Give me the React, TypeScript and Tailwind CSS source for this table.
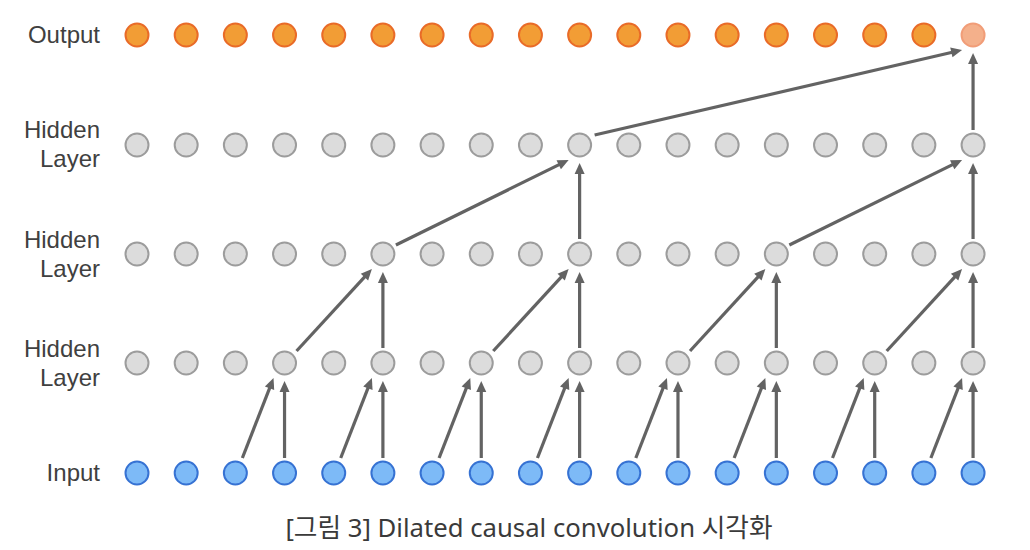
import React from "react";

const X = (i: number) => 137 + i * 49.18;
const ROWS = [473, 363, 254, 145, 35]; // input, h1, h2, h3, output

type Arrow = { x1: number; y1: number; x2: number; y2: number };

function buildArrows(): Arrow[] {
  const arrows: Arrow[] = [];
  const tip = { dx: -11, dy: 15 };
  const layers: { from: number; to: number; step: number; idx: number[]; start: [number, number] }[] = [
    { from: 0, to: 1, step: 1, idx: [3, 5, 7, 9, 11, 13, 15, 17], start: [7, -15] },
    { from: 1, to: 2, step: 2, idx: [5, 9, 13, 17], start: [12, -12] },
    { from: 2, to: 3, step: 4, idx: [9, 17], start: [13, -9] },
    { from: 3, to: 4, step: 8, idx: [17], start: [15, -10] },
  ];
  for (const l of layers) {
    for (const i of l.idx) {
      const ys = ROWS[l.from];
      const yt = ROWS[l.to];
      arrows.push({ x1: X(i), y1: ys - 15, x2: X(i), y2: yt + 18 });
      const si = i - l.step;
      arrows.push({
        x1: X(si) + l.start[0],
        y1: ys + l.start[1],
        x2: X(i) + tip.dx,
        y2: yt + tip.dy,
      });
    }
  }
  return arrows;
}

function ArrowShape({ a }: { a: Arrow }) {
  const dx = a.x2 - a.x1;
  const dy = a.y2 - a.y1;
  const len = Math.hypot(dx, dy);
  const ux = dx / len;
  const uy = dy / len;
  const hl = 11;
  const hw = 5;
  const bx = a.x2 - ux * hl;
  const by = a.y2 - uy * hl;
  const px = -uy;
  const py = ux;
  const pts = `${a.x2},${a.y2} ${bx + px * hw},${by + py * hw} ${bx - px * hw},${by - py * hw}`;
  return (
    <g>
      <line x1={a.x1} y1={a.y1} x2={bx + ux * 1} y2={by + uy * 1} stroke="#636363" strokeWidth={3.2} />
      <polygon points={pts} fill="#636363" />
    </g>
  );
}

const labels: string[][] = [["Output"], ["Hidden", "Layer"], ["Hidden", "Layer"], ["Hidden", "Layer"], ["Input"]];

export default function App() {
  const arrows = buildArrows();
  const idx = Array.from({ length: 18 }, (_, i) => i);
  return (
    <div className="w-[1030px] h-[550px] bg-white flex flex-col overflow-hidden">
      <div className="flex h-[500px]">
        <div
          className="w-[110px] -mt-5 flex flex-col pr-[10px] text-[24px] leading-[29px] text-[#404040]"
          style={{ fontFamily: '"Liberation Sans", Arial, sans-serif' }}
        >
          {labels.map((l, k) => (
            <div key={k} className="h-[109.5px] flex flex-col items-end justify-center shrink-0">
              {l.map((t) => (
                <span key={t}>{t}</span>
              ))}
            </div>
          ))}
        </div>
        <svg width={920} height={500} viewBox="110 0 920 500" className="block">
          {arrows.map((a, k) => (
            <ArrowShape key={k} a={a} />
          ))}
          {idx.map((i) => (
            <circle key={`o${i}`} cx={X(i)} cy={ROWS[4]} r={11.5} fill={i === 17 ? "#f4b08b" : "#f29d35"} stroke={i === 17 ? "#f19d78" : "#e96b28"} strokeWidth={2} />
          ))}
          {[1, 2, 3].map((r) =>
            idx.map((i) => (
              <circle key={`h${r}-${i}`} cx={X(i)} cy={ROWS[r]} r={11.5} fill="#dcdcdc" stroke="#9c9c9c" strokeWidth={2} />
            ))
          )}
          {idx.map((i) => (
            <circle key={`i${i}`} cx={X(i)} cy={ROWS[0]} r={11.5} fill="#7dbaf7" stroke="#3672d3" strokeWidth={2} />
          ))}
        </svg>
      </div>
      <div
        className="h-[50px] flex items-center justify-center text-[25.7px] leading-none text-[#3a3a3a] pl-[28px] pt-[5px]"
        style={{ fontFamily: '"Noto Sans", "Noto Sans CJK KR", sans-serif' }}
      >
        [그림 3] Dilated causal convolution 시각화
      </div>
    </div>
  );
}
